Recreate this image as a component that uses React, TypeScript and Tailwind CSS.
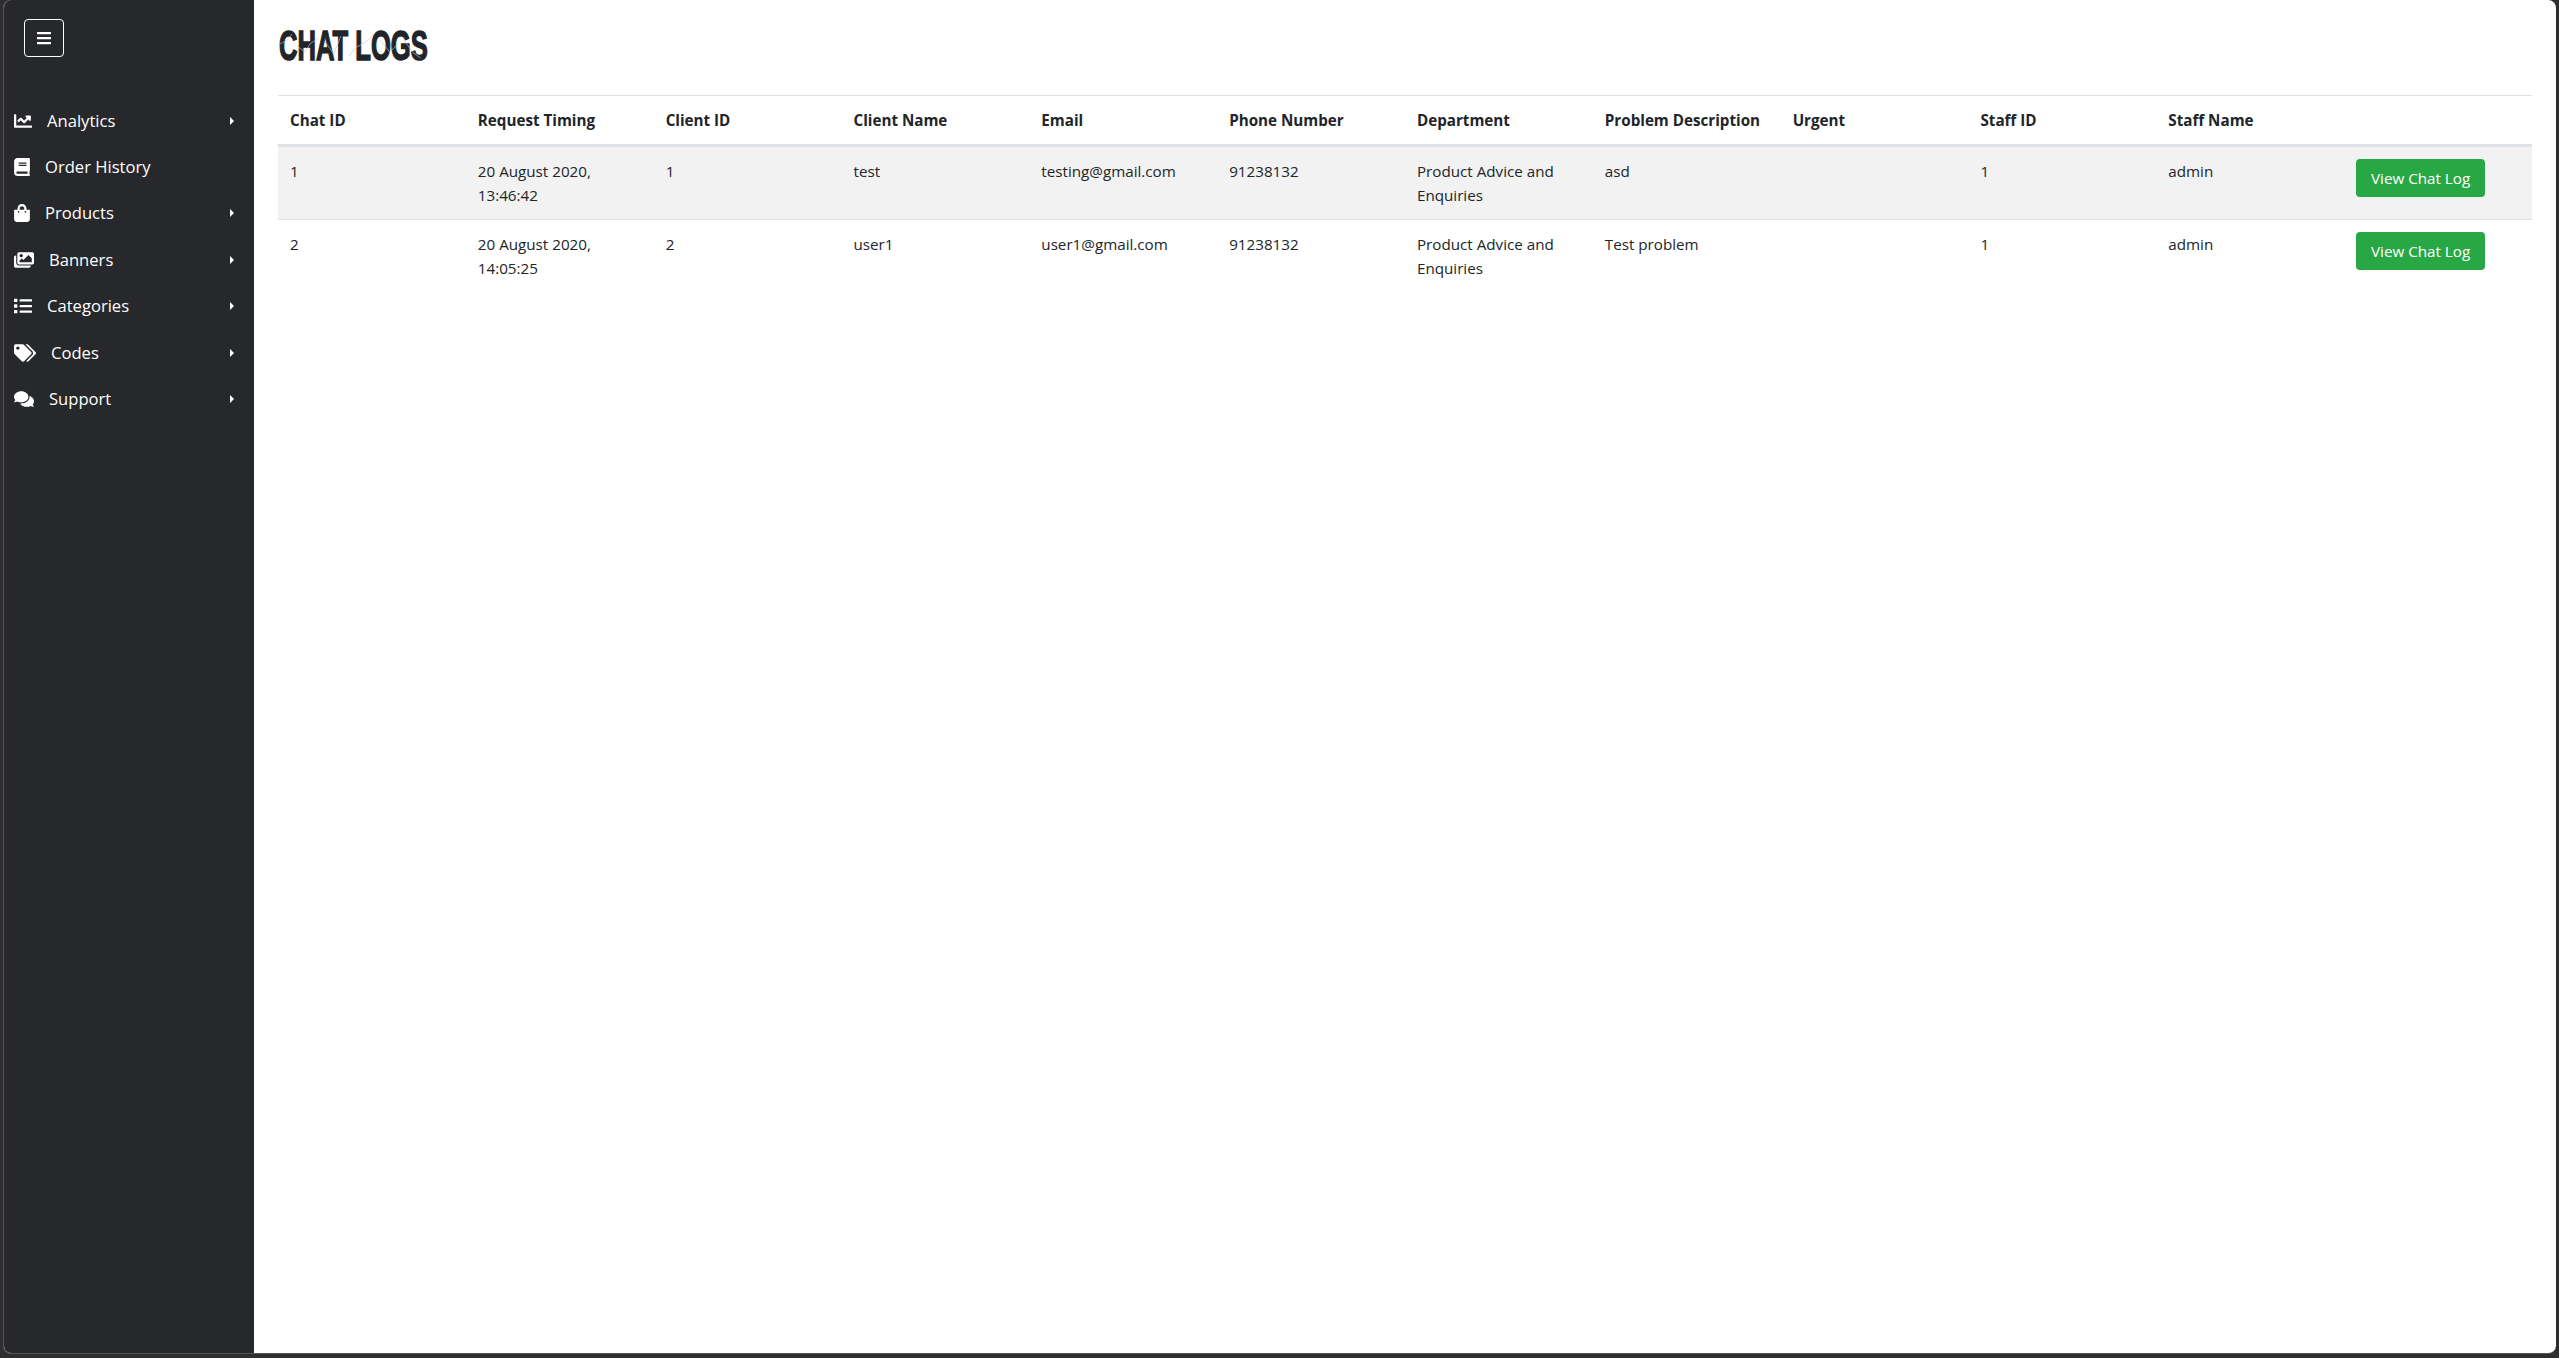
import { FaBars, FaBook, FaChartLine, FaComments, FaImages, FaList, FaShoppingBag, FaTags } from "react-icons/fa";
import type { IconType } from "react-icons";

const navItems: { label: string; icon: IconType; iconClass: string; caret: boolean }[] = [
  { label: "Analytics", icon: FaChartLine, iconClass: "w-[18px]", caret: true },
  { label: "Order History", icon: FaBook, iconClass: "w-[16px]", caret: false },
  { label: "Products", icon: FaShoppingBag, iconClass: "w-[16px]", caret: true },
  { label: "Banners", icon: FaImages, iconClass: "w-[20px]", caret: true },
  { label: "Categories", icon: FaList, iconClass: "w-[18px]", caret: true },
  { label: "Codes", icon: FaTags, iconClass: "w-[22px]", caret: true },
  { label: "Support", icon: FaComments, iconClass: "w-[20px]", caret: true },
];

const columns = [
  "Chat ID",
  "Request Timing",
  "Client ID",
  "Client Name",
  "Email",
  "Phone Number",
  "Department",
  "Problem Description",
  "Urgent",
  "Staff ID",
  "Staff Name",
  "",
];

const rows = [
  ["1", "20 August 2020, 13:46:42", "1", "test", "testing@gmail.com", "91238132", "Product Advice and Enquiries", "asd", "", "1", "admin"],
  ["2", "20 August 2020, 14:05:25", "2", "user1", "user1@gmail.com", "91238132", "Product Advice and Enquiries", "Test problem", "", "1", "admin"],
];

export default function App() {
  return (
    <div className="h-screen w-full overflow-hidden bg-[#2e2e2e] pb-[4px] pl-[3px] pr-[3px] font-['Open_Sans','Noto_Sans',sans-serif] text-[15.2px] leading-6 text-[#212529]">
      <div className="flex h-full overflow-hidden rounded-[8px] border-b border-l border-[#555555] bg-white">
        <aside className="w-[250px] shrink-0 bg-[#27282b] text-white">
          <div className="pl-5 pt-[19px]">
            <button className="flex h-[38px] w-10 items-center justify-center rounded border border-white">
              <FaBars className="text-[16px]" />
            </button>
          </div>
          <nav className="mt-[40.5px] text-[16.6px]">
            {navItems.map((item) => (
              <div key={item.label} className="flex h-[46.4px] items-center pl-[10px] pr-5">
                <item.icon className={`mr-[15px] h-[18px] shrink-0 ${item.iconClass}`} />
                <span>{item.label}</span>
                {item.caret && (
                  <span className="ml-auto h-0 w-0 border-y-[4.8px] border-l-[4.8px] border-y-transparent border-l-white" />
                )}
              </div>
            ))}
          </nav>
        </aside>
        <main className="min-w-0 flex-1 pl-6 pr-[24px]">
          <div className="h-[95px] pl-[1px] pt-[22px]">
            <h1 className="relative w-[244px] origin-left scale-x-[0.595] whitespace-nowrap font-['Liberation_Sans',sans-serif] text-[43px] font-bold leading-[46px] text-[#212529] [-webkit-text-stroke:1.5px_#212529]">
              CHAT LOGS
              <svg className="absolute left-0 top-0 h-[46px] w-[244px]" viewBox="0 0 244 46" fill="none" stroke="#c4c8cc" strokeWidth="0.8">
                <path d="M2 22 L14 18 L22 12 M30 24 L44 30 L52 22 L66 16 M78 20 L92 32 L104 14" />
                <path d="M118 34 L128 26 L146 20 L160 12 M170 18 L186 30 L200 22 M208 16 L224 30 L238 36" />
              </svg>
            </h1>
          </div>
          <table className="w-full table-fixed border-collapse">
            <thead>
              <tr className="border-t border-[#dee2e6]">
                {columns.map((col, i) => (
                  <th key={i} className="border-b-[3px] border-[#dee2e6] p-3 text-left align-top font-bold">
                    {col}
                  </th>
                ))}
              </tr>
            </thead>
            <tbody>
              {rows.map((row, idx) => (
                <tr key={row[0]} className={idx === 0 ? "border-b border-[#dee2e6] bg-[#f2f2f2]" : ""}>
                  {row.map((cell, i) => (
                    <td key={i} className="p-3 align-top">
                      {cell}
                    </td>
                  ))}
                  <td className="p-3 align-top">
                    <button className="h-[38px] w-[129px] whitespace-nowrap rounded bg-[#28a745] text-white">
                      View Chat Log
                    </button>
                  </td>
                </tr>
              ))}
            </tbody>
          </table>
        </main>
      </div>
    </div>
  );
}
